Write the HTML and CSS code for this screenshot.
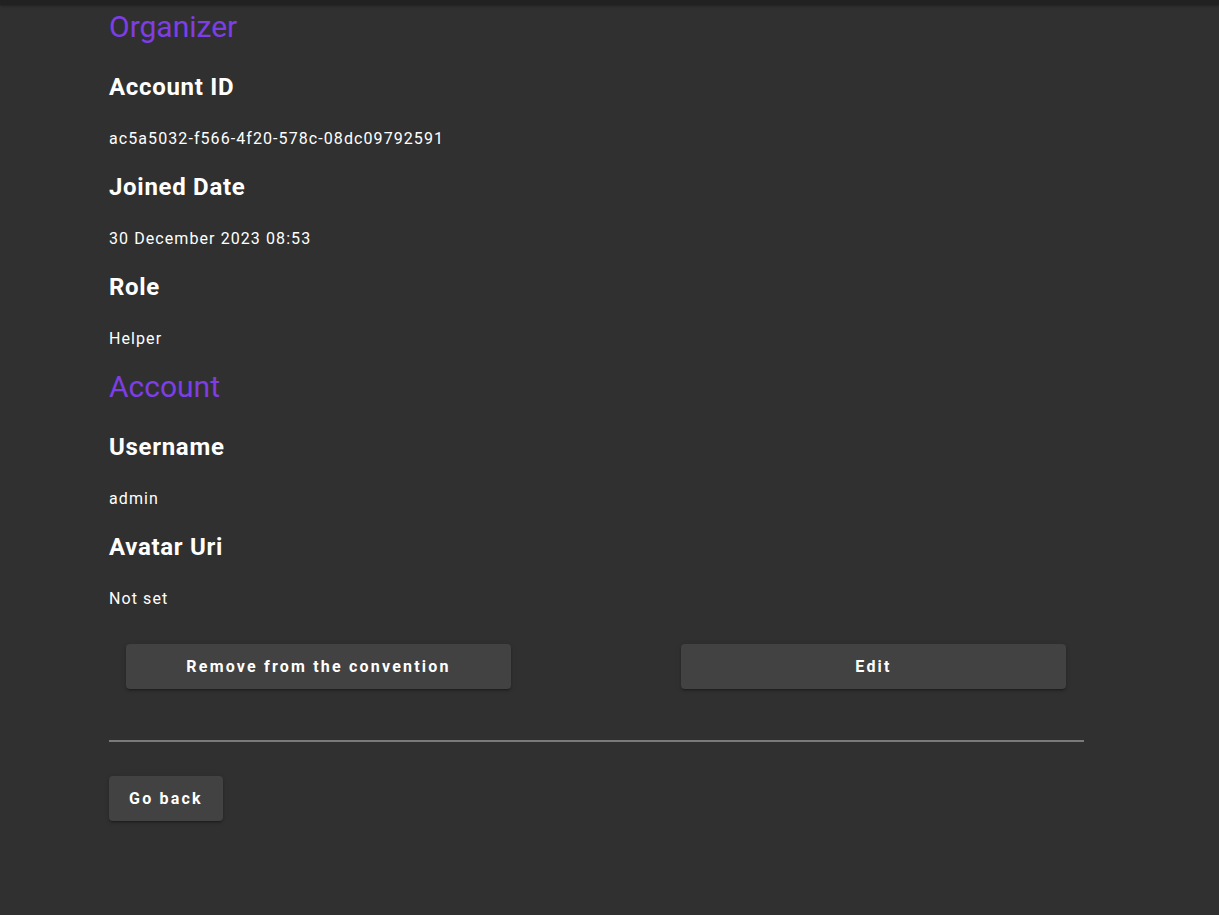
FILE: index.html
```html
<!DOCTYPE html>
<html lang="en">
<head>
<meta charset="utf-8">
<title>Organizer</title>
<link rel="stylesheet" href="styles.css">
</head>
<body>
<div class="topbar"></div>
<main class="page">
  <h2 class="section-title first">Organizer</h2>
  <h3 class="field-title">Account ID</h3>
  <p class="field-value">ac5a5032-f566-4f20-578c-08dc09792591</p>
  <h3 class="field-title">Joined Date</h3>
  <p class="field-value">30 December 2023 08:53</p>
  <h3 class="field-title">Role</h3>
  <p class="field-value">Helper</p>

  <h2 class="section-title">Account</h2>
  <h3 class="field-title">Username</h3>
  <p class="field-value">admin</p>
  <h3 class="field-title">Avatar Uri</h3>
  <p class="field-value">Not set</p>

  <div class="actions">
    <button class="btn btn-wide">Remove from the convention</button>
    <button class="btn btn-wide">Edit</button>
  </div>

  <hr class="divider">

  <button class="btn btn-back">Go back</button>
</main>
</body>
</html>
```
FILE: styles.css
```css
html, body {
  margin: 0;
  padding: 0;
  background: #303030;
  color: #ffffff;
  font-family: Roboto, "Noto Sans", "Liberation Sans", sans-serif;
}
body {
  min-height: 915px;
}
.topbar {
  height: 5px;
  background: #212121;
  box-shadow: 0 1px 3px rgba(0,0,0,0.35);
}
.page {
  width: 975px;
  margin-left: 109px;
}
.section-title {
  margin: 14px 0 0;
  font-size: 30px;
  line-height: 44px;
  font-weight: 400;
  color: #7e3ee6;
}
.section-title.first {
  margin-top: 0;
}
.field-title {
  margin: 22px 0 0;
  font-size: 24px;
  line-height: 32px;
  font-weight: 700;
  letter-spacing: 0.7px;
}
.field-value + .field-title {
  margin-top: 20px;
}
.field-value {
  margin: 24px 0 0;
  font-size: 16px;
  line-height: 24px;
  font-weight: 400;
  letter-spacing: 1.08px;
}
.actions {
  display: flex;
  justify-content: space-between;
  padding: 0 18px 0 17px;
  margin-top: 33px;
}
.btn {
  display: inline-flex;
  align-items: center;
  justify-content: center;
  height: 45px;
  border: none;
  border-radius: 4px;
  background: #424242;
  color: #ffffff;
  font-family: Roboto, "Noto Sans", "Liberation Sans", sans-serif;
  font-size: 16px;
  font-weight: 700;
  letter-spacing: 2.2px;
  box-shadow: 0 3px 1px -2px rgba(0,0,0,0.2), 0 2px 2px 0 rgba(0,0,0,0.14), 0 1px 5px 0 rgba(0,0,0,0.12);
  cursor: pointer;
}
.btn-wide {
  width: 385px;
}
.divider {
  margin: 51px 0 0;
  border: none;
  height: 2px;
  background: #7a7a7a;
}
.btn-back {
  width: 114px;
  padding: 0 10px;
  margin-top: 34px;
}
```
